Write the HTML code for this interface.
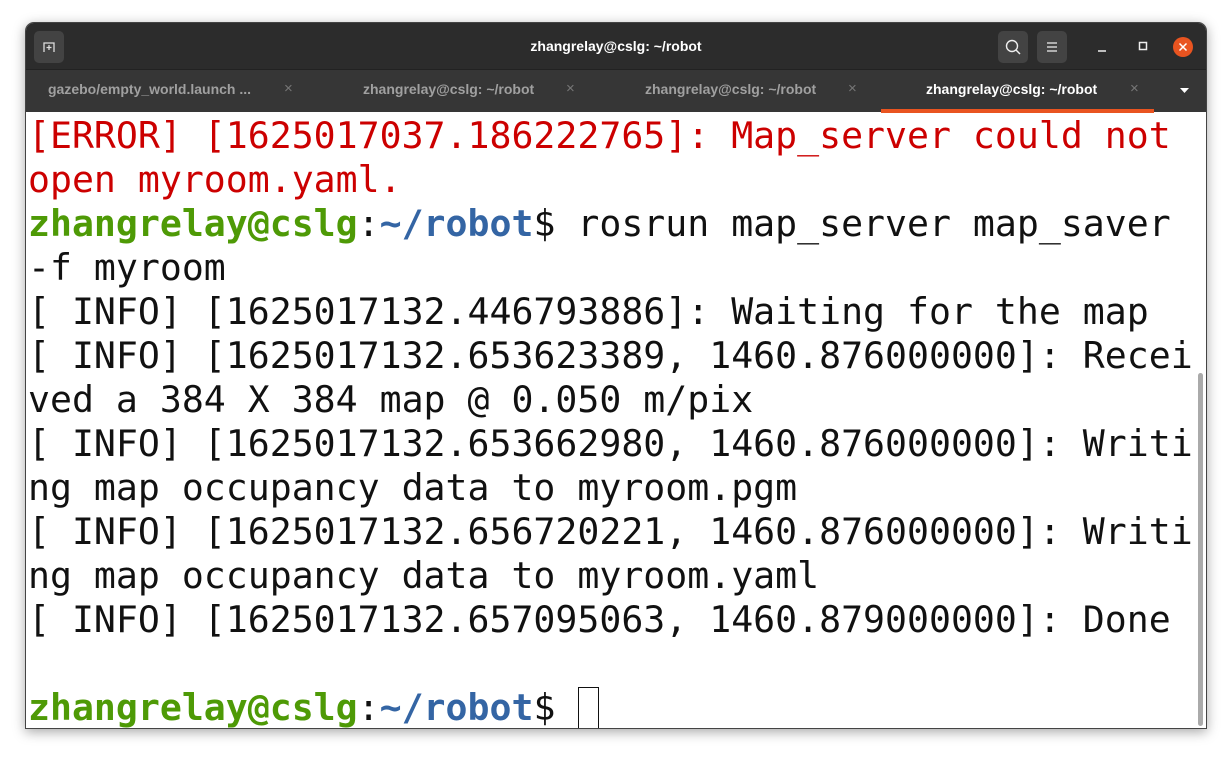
<!DOCTYPE html>
<html><head><meta charset="utf-8"><style>
html,body{margin:0;padding:0;background:#fff;width:1232px;height:758px;overflow:hidden;font-family:"Liberation Sans",sans-serif}
.win{position:absolute;left:25px;top:22px;width:1182px;height:707px;background:#fff;border-radius:9px 9px 0 0;overflow:hidden;box-shadow:0 3px 12px rgba(0,0,0,.35);border:1px solid #444;box-sizing:border-box}
.title{position:absolute;left:0;top:0;width:100%;height:46px;background:#2c2c2c;color:#fff;font-weight:bold;font-size:14px;text-align:center;line-height:46px}
.tabs{position:absolute;left:0;top:46px;width:100%;height:43px;background:#363636;border-top:1px solid #222;box-sizing:border-box}
.tab{position:absolute;top:-2px;height:42px;line-height:42px;font-size:14px;font-weight:bold;color:#a0a0a0}
.x{position:absolute;top:-2px;color:#777;font-weight:normal;font-size:15px}
.btn{position:absolute;top:8px;width:30px;height:32px;background:#434343;border-radius:5px}
.term{position:absolute;left:2px;top:91px;font-family:"DejaVu Sans Mono","Liberation Mono",monospace;font-size:36.5px;line-height:44px;white-space:pre;color:#111}
.r{color:#cc0000}.g{color:#4e9a06;font-weight:bold}.b{color:#3465a4;font-weight:bold}
</style></head><body>
<div class="win">
<div class="title">zhangrelay@cslg: ~/robot
 <div class="btn" style="left:8px;"><svg width="30" height="32"><path d="M10 21V12h10v9M15 14v5M12.5 16.5h5" stroke="#ddd" stroke-width="1.3" fill="none"/></svg></div>
 <div class="btn" style="left:972px"><svg width="30" height="32"><circle cx="14" cy="15" r="5.5" stroke="#eee" stroke-width="1.4" fill="none"/><path d="M18 19l4 4" stroke="#eee" stroke-width="1.5"/></svg></div>
 <div class="btn" style="left:1011px"><svg width="30" height="32"><path d="M10 12h10M10 16h10M10 20h10" stroke="#eee" stroke-width="1.3"/></svg></div>
 <svg style="position:absolute;left:1064px;top:0" width="130" height="46"><path d="M8 28h8" stroke="#eee" stroke-width="1.5"/><rect x="49.5" y="19.5" width="7" height="7" stroke="#eee" stroke-width="1.5" fill="none"/><circle cx="93" cy="24" r="10" fill="#e95420"/><path d="M89.5 20.5l7 7M96.5 20.5l-7 7" stroke="#fff" stroke-width="1.5"/></svg>
</div>
<div class="tabs">
 <div class="tab" style="left:22px">gazebo/empty_world.launch ...</div><div class="x" style="left:258px;line-height:42px">×</div>
 <div class="tab" style="left:337px">zhangrelay@cslg: ~/robot</div><div class="x" style="left:540px;line-height:42px">×</div>
 <div class="tab" style="left:619px">zhangrelay@cslg: ~/robot</div><div class="x" style="left:822px;line-height:42px">×</div>
 <div class="tab" style="left:900px;color:#fff">zhangrelay@cslg: ~/robot</div><div class="x" style="left:1104px;line-height:42px">×</div>
 <div style="position:absolute;left:855px;top:39px;width:273px;height:4px;background:#e95420"></div>
 <svg style="position:absolute;left:1152px;top:16px" width="14" height="10"><path d="M2 2h9l-4.5 5z" fill="#fff"/></svg>
</div>
<div class="term"><span class="r">[ERROR] [1625017037.186222765]: Map_server could not
open myroom.yaml.</span>
<span class="g">zhangrelay@cslg</span>:<span class="b">~/robot</span>$ rosrun map_server map_saver
-f myroom
[ INFO] [1625017132.446793886]: Waiting for the map
[ INFO] [1625017132.653623389, 1460.876000000]: Recei
ved a 384 X 384 map @ 0.050 m/pix
[ INFO] [1625017132.653662980, 1460.876000000]: Writi
ng map occupancy data to myroom.pgm
[ INFO] [1625017132.656720221, 1460.876000000]: Writi
ng map occupancy data to myroom.yaml
[ INFO] [1625017132.657095063, 1460.879000000]: Done

<span class="g">zhangrelay@cslg</span>:<span class="b">~/robot</span>$ </div>
<div style="position:absolute;left:552px;top:664px;width:21px;height:42px;border:1.5px solid #111;box-sizing:border-box"></div>
<div style="position:absolute;left:1172px;top:350px;width:5px;height:353px;background:#aaa;border-radius:3px"></div>
</div>
</body></html>
